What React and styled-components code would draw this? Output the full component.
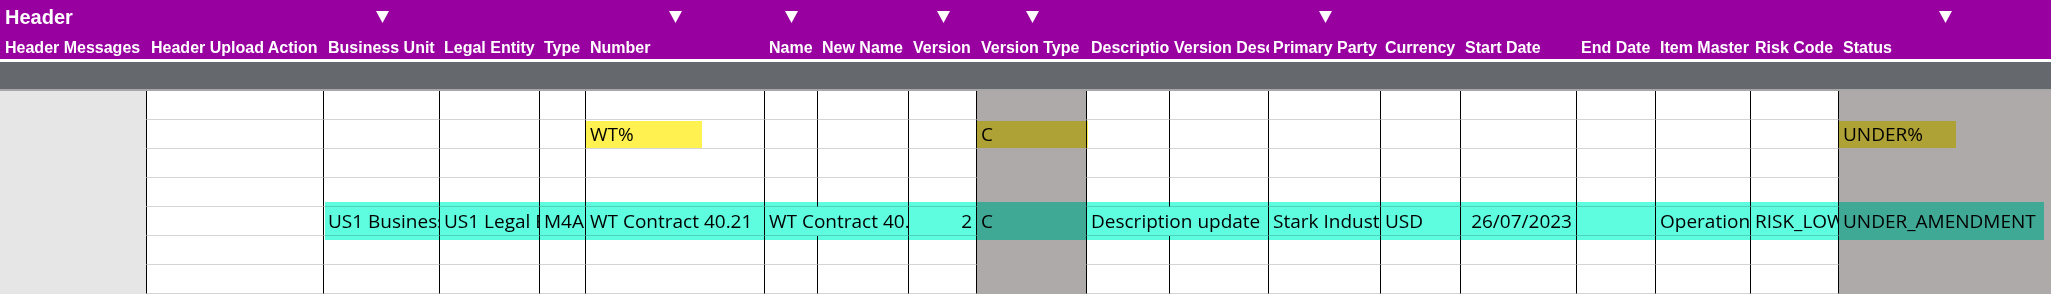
import React from 'react'
import styled, { createGlobalStyle } from 'styled-components'

const columns = [
  { key: 'messages', label: 'Header Messages', width: 147, tone: 'side' },
  { key: 'uploadAction', label: 'Header Upload Action', width: 177 },
  { key: 'businessUnit', label: 'Business Unit', width: 116, filter: true },
  { key: 'legalEntity', label: 'Legal Entity', width: 100 },
  { key: 'type', label: 'Type', width: 46 },
  { key: 'number', label: 'Number', width: 179, filter: true },
  { key: 'name', label: 'Name', width: 53, filter: true },
  { key: 'newName', label: 'New Name', width: 91 },
  { key: 'version', label: 'Version', width: 68, filter: true, align: 'right' },
  { key: 'versionType', label: 'Version Type', width: 110, filter: true, tone: 'key' },
  { key: 'description', label: 'Description', width: 83 },
  { key: 'versionDescription', label: 'Version Description', width: 99 },
  { key: 'primaryParty', label: 'Primary Party', width: 112, filter: true },
  { key: 'currency', label: 'Currency', width: 80 },
  { key: 'startDate', label: 'Start Date', width: 116, align: 'right' },
  { key: 'endDate', label: 'End Date', width: 79, align: 'right' },
  { key: 'itemMaster', label: 'Item Master', width: 95 },
  { key: 'riskCode', label: 'Risk Code', width: 88 },
  { key: 'status', label: 'Status', width: 212, filter: true, tone: 'key' },
]

// [column key, text, columns the text runs over]
const rows = [
  [],
  [['number', 'WT%'], ['versionType', 'C'], ['status', 'UNDER%']],
  [],
  [],
  [
    ['businessUnit', 'US1 Business Unit'],
    ['legalEntity', 'US1 Legal Entity'],
    ['type', 'M4A'],
    ['number', 'WT Contract 40.21'],
    ['name', 'WT Contract 40.21', 2],
    ['version', '2'],
    ['versionType', 'C'],
    ['description', 'Description update', 2],
    ['primaryParty', 'Stark Industries'],
    ['currency', 'USD'],
    ['startDate', '26/07/2023'],
    ['itemMaster', 'Operations'],
    ['riskCode', 'RISK_LOW'],
    ['status', 'UNDER_AMENDMENT'],
  ],
  [],
  [],
]

// search hits painted over the sheet
const marks = [
  { row: 2, from: 6, to: 7, width: 116, color: '#fff250', inset: '1px 0 1px 0' },
  { row: 2, from: 10, to: 11, color: '#fff250', inset: '1px -1px 1px 0' },
  { row: 2, from: 19, to: 20, width: 117, color: '#fff250', inset: '1px 0 1px 0' },
  { row: 5, from: 3, to: 20, color: '#5efde0', inset: '-5px 7px -4px 1px' },
]

const fills = { side: '#e6e6e6', key: '#aeaaaa' }
const track = columns.map(c => `${c.width}px`).join(' ')

const GlobalStyle = createGlobalStyle`
  html, body {
    margin: 0;
    padding: 0;
    background: #ffffff;
  }
  body {
    width: 2051px;
    height: 294px;
    overflow: hidden;
  }
`

const Page = styled.div`
  width: 2051px;
  display: flex;
  flex-direction: column;
`

const HeaderBand = styled.div`
  display: grid;
  grid-template-columns: ${track};
  grid-template-rows: 33px 26px;
  background: #9900a0;
  color: #ffffff;
  font-family: "Liberation Sans", Arial, sans-serif;
  font-weight: bold;
  border-bottom: 3px solid #ffffff;
`

const Title = styled.div`
  grid-row: 1;
  grid-column: 1 / span 2;
  padding: 1px 0 0 5px;
  font-size: 20px;
  line-height: 32px;
`

const FilterSlot = styled.div`
  grid-row: 1;
  grid-column: ${p => p.$col};
  display: flex;
  align-items: center;
  justify-content: center;
`

const Label = styled.div`
  grid-row: 2;
  grid-column: ${p => p.$col};
  box-sizing: border-box;
  height: 26px;
  padding: 2px 0 0 ${p => (p.$col === 1 ? 5 : 4)}px;
  font-size: 16px;
  line-height: 26px;
  white-space: nowrap;
  overflow: hidden;
`

const FreezeBar = styled.div`
  height: 27px;
  background: #65686c;
  border-bottom: 2px solid #a7a7a7;
`

const Sheet = styled.div`
  display: grid;
  grid-template-columns: ${track};
  grid-auto-rows: 29px;
  background: #ffffff;
`

const Cell = styled.div`
  grid-row: ${p => p.$row};
  grid-column: ${p => p.$col} / span ${p => p.$span};
  box-sizing: border-box;
  padding: 0 4px;
  overflow: hidden;
  white-space: nowrap;
  font-family: "Open Sans", "Noto Sans", sans-serif;
  font-size: 19px;
  line-height: 28px;
  color: #000000;
  text-align: ${p => p.$align};
  background: ${p => fills[p.$tone] || 'transparent'};
  border-bottom: 1px solid ${p => (p.$tone ? 'transparent' : '#d4d4d4')};
  border-right: ${p => (p.$last ? 'none' : '1px solid #000000')};
`

const Mark = styled.div`
  grid-row: ${p => p.$row};
  grid-column: ${p => p.$from} / ${p => p.$to};
  justify-self: ${p => (p.$width ? 'start' : 'stretch')};
  width: ${p => (p.$width ? `${p.$width}px` : 'auto')};
  margin: ${p => p.$inset};
  background: ${p => p.$color};
  mix-blend-mode: multiply;
  pointer-events: none;
`

function Caret() {
  return (
    <svg width="13" height="12" viewBox="0 0 13 12">
      <polygon points="0,0 13,0 6.5,12" fill="#ffffff" />
    </svg>
  )
}

// one row of cells; a text with a span swallows the empty cells after it
function rowCells(specs, rowIndex) {
  const byKey = {}
  specs.forEach(([key, text, span]) => {
    byKey[key] = { text, span: span || 1 }
  })
  const cells = []
  let i = 0
  while (i < columns.length) {
    const col = columns[i]
    const hit = byKey[col.key] || { text: '', span: 1 }
    cells.push(
      <Cell
        key={`${rowIndex}-${col.key}`}
        $row={rowIndex + 1}
        $col={i + 1}
        $span={hit.span}
        $tone={col.tone}
        $align={col.align || 'left'}
        $last={i + hit.span === columns.length}
      >
        {hit.text}
      </Cell>
    )
    i += hit.span
  }
  return cells
}

export default function App() {
  return (
    <Page>
      <GlobalStyle />
      <HeaderBand>
        <Title>Header</Title>
        {columns.map((c, i) =>
          c.filter ? (
            <FilterSlot key={`f-${c.key}`} $col={i + 1}>
              <Caret />
            </FilterSlot>
          ) : null
        )}
        {columns.map((c, i) => (
          <Label key={`l-${c.key}`} $col={i + 1}>
            {c.label}
          </Label>
        ))}
      </HeaderBand>
      <FreezeBar />
      <Sheet>
        {rows.map((specs, r) => rowCells(specs, r))}
        {marks.map((m, i) => (
          <Mark
            key={`m-${i}`}
            $row={m.row}
            $from={m.from}
            $to={m.to}
            $width={m.width}
            $color={m.color}
            $inset={m.inset}
          />
        ))}
      </Sheet>
    </Page>
  )
}
